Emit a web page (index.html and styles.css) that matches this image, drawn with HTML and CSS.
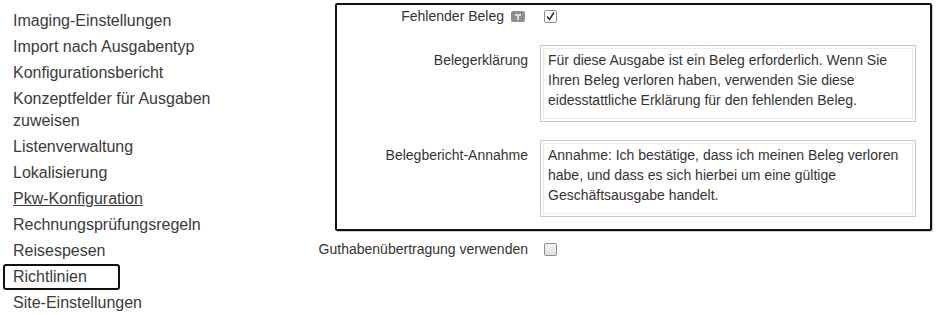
FILE: index.html
```html
<!DOCTYPE html>
<html lang="de">
<head>
<meta charset="utf-8">
<title>Richtlinien</title>
<link rel="stylesheet" href="styles.css">
</head>
<body>
<div class="page">
  <nav class="menu">
    <ul>
      <li><a href="#">Imaging-Einstellungen</a></li>
      <li><a href="#">Import nach Ausgabentyp</a></li>
      <li><a href="#">Konfigurationsbericht</a></li>
      <li><a href="#">Konzeptfelder für Ausgaben zuweisen</a></li>
      <li><a href="#">Listenverwaltung</a></li>
      <li><a href="#">Lokalisierung</a></li>
      <li><a href="#" class="hover">Pkw-Konfiguration</a></li>
      <li><a href="#">Rechnungsprüfungsregeln</a></li>
      <li><a href="#">Reisespesen</a></li>
      <li><a href="#" class="focus">Richtlinien</a></li>
      <li><a href="#">Site-Einstellungen</a></li>
    </ul>
  </nav>
  <main class="content">
    <section class="group">
      <div class="row row-first">
        <div class="label">Fehlender Beleg <span class="help"><svg width="16" height="14" viewBox="0 0 16 14"><rect x="1" y="2" width="14" height="11" rx="2" fill="#8f8f8f"/><rect x="5" y="5" width="6" height="2" fill="#dcdcdc"/><rect x="7" y="7" width="2" height="4" fill="#dcdcdc"/></svg></span></div>
        <div class="control"><span class="checkbox checked"><svg width="11" height="11" viewBox="0 0 11 11"><path d="M2 5.5 L4.5 8.5 L9 1.5" fill="none" stroke="#333" stroke-width="1.6"/></svg></span></div>
      </div>
      <div class="row row-text">
        <div class="label">Belegerklärung</div>
        <div class="control"><textarea class="text">Für diese Ausgabe ist ein Beleg erforderlich. Wenn Sie Ihren Beleg verloren haben, verwenden Sie diese eidesstattliche Erklärung für den fehlenden Beleg.</textarea></div>
      </div>
      <div class="row row-text row-second">
        <div class="label">Belegbericht-Annahme</div>
        <div class="control"><textarea class="text">Annahme: Ich bestätige, dass ich meinen Beleg verloren habe, und dass es sich hierbei um eine gültige Geschäftsausgabe handelt.</textarea></div>
      </div>
    </section>
    <div class="row row-outside">
      <div class="label">Guthabenübertragung verwenden</div>
      <div class="control"><span class="checkbox"></span></div>
    </div>
  </main>
</div>
</body>
</html>
```
FILE: styles.css
```css
html, body {
  margin: 0;
  padding: 0;
  background: #fff;
}
body {
  font-family: "Liberation Sans", Arial, sans-serif;
  color: #333;
}
.page {
  display: flex;
  align-items: flex-start;
}
.menu {
  width: 300px;
  flex: none;
}
.menu ul {
  list-style: none;
  margin: 0;
  padding: 8px 0 0 0;
  width: 220px;
}
.menu li {
  padding: 2px 0;
}
.menu a {
  display: inline-block;
  color: #3a3a3a;
  text-decoration: none;
  font-size: 16px;
  line-height: 22px;
  padding-left: 13px;
}
.menu a.hover {
  text-decoration: underline;
}
.menu a.focus {
  margin-left: 3px;
  padding-left: 8px;
  width: 105px;
  border: 2px solid #111;
  border-radius: 3px;
  line-height: 22px;
  margin-top: -2px;
  margin-bottom: -2px;
}
.content {
  flex: none;
  width: 639px;
  padding-top: 3px;
}
.group {
  margin-left: 35px;
  width: 593px;
  border: 2px solid #111;
  border-radius: 2px;
  padding: 1px 0 12px 0;
  box-shadow: 1px 1px 0 #ccc;
}
.row {
  display: flex;
  align-items: flex-start;
  gap: 12px;
}
.label {
  width: 191px;
  text-align: right;
  font-size: 14px;
  line-height: 20px;
  color: #333;
  display: flex;
  justify-content: flex-end;
  align-items: center;
  gap: 6px;
}
.row-text {
  margin-top: 19px;
}
.row-text .label {
  padding-top: 5px;
}
.row-second {
  margin-top: 18px;
}
.row-outside {
  margin-top: 8px;
}
.row-outside .label {
  width: 228px;
}
.control {
  display: flex;
  align-items: center;
  min-height: 20px;
}
.help {
  display: inline-flex;
  width: 16px;
  height: 14px;
  margin-right: 2px;
}
.checkbox {
  display: inline-flex;
  align-items: center;
  justify-content: center;
  box-sizing: border-box;
  width: 13px;
  height: 13px;
  margin-left: 4px;
  border: 1px solid #8c8c8c;
  border-radius: 2px;
  background: linear-gradient(#f4f4f4, #e0e0e0);
}
.checkbox.checked {
  background: #fff;
}
.text {
  box-sizing: border-box;
  width: 376px;
  height: 77px;
  margin: 0;
  padding: 4px 7px;
  border: 1px solid #c9c9c9;
  border-radius: 0;
  box-shadow: inset 0 0 0 2px #fff, inset 0 0 0 3px #ececec;
  font-family: "Liberation Sans", Arial, sans-serif;
  font-size: 14px;
  line-height: 20px;
  color: #333;
  resize: none;
  overflow: hidden;
  background: #fff;
}
```
